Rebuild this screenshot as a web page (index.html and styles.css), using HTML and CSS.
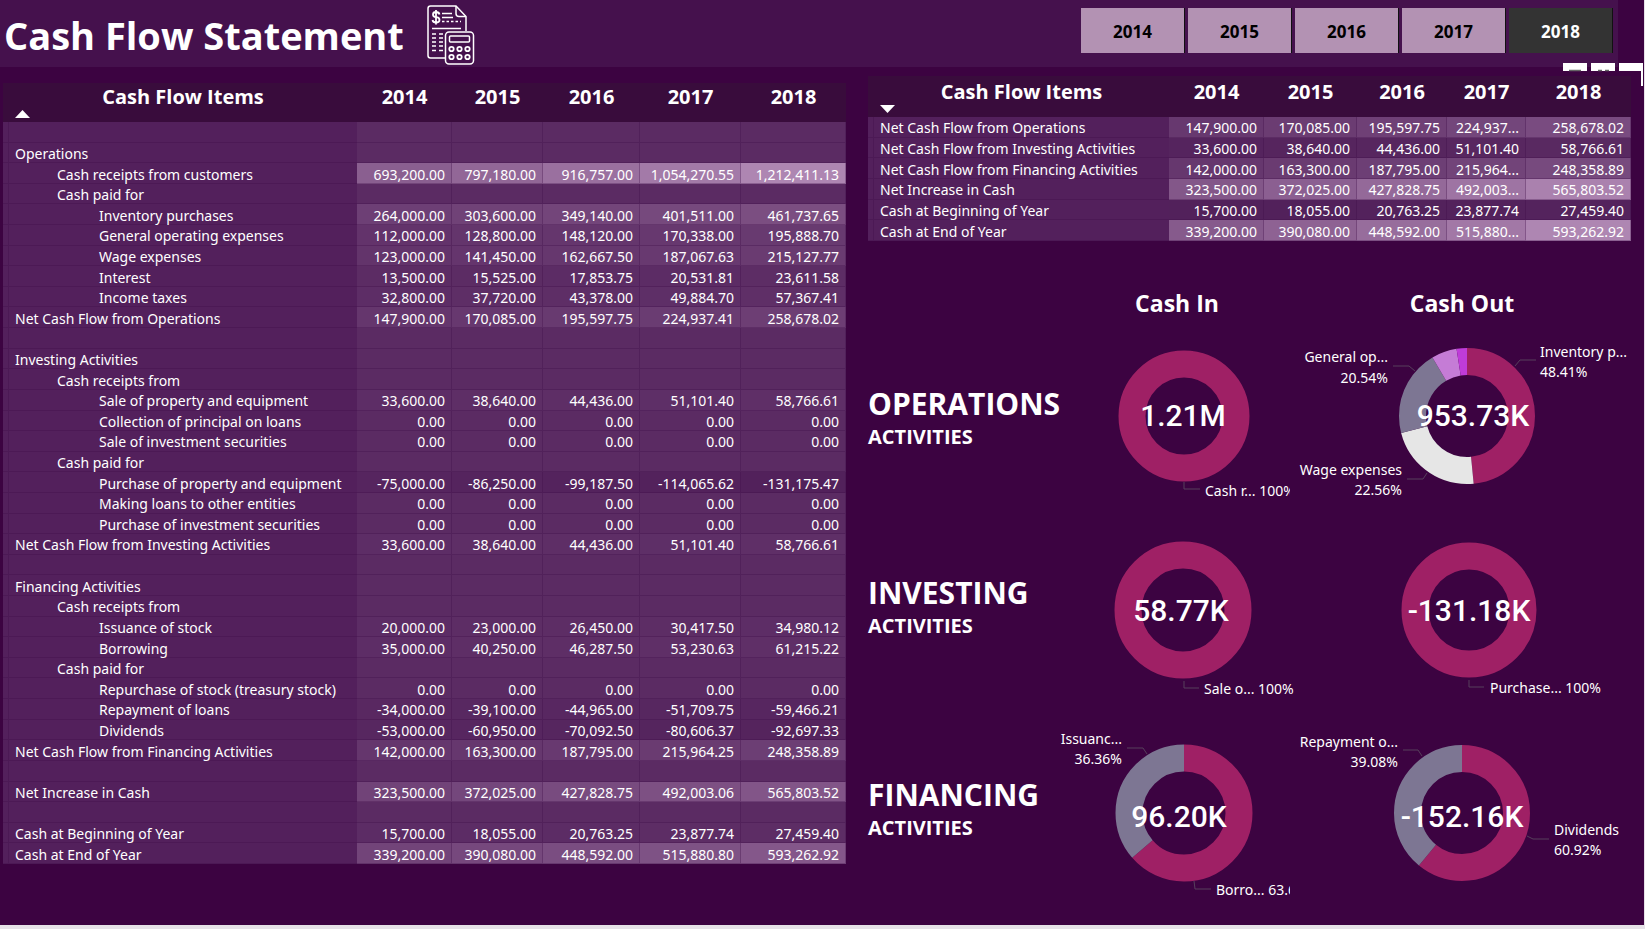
FILE: index.html
```html
<!DOCTYPE html>
<html lang="en">
<head>
<meta charset="utf-8">
<title>Cash Flow Statement</title>
<link rel="stylesheet" href="styles.css">
</head>
<body>
<div class="page">
  <header class="topbar">
    <h1 class="title">Cash Flow Statement</h1>
    <svg class="logo" viewBox="0 0 48 60" width="48" height="60" fill="none" stroke="#fff" stroke-width="1.5" aria-hidden="true">
      <path d="M18 53H3.500Q1 53 1 50.500V3.500Q1 1 3.500 1H29L39 11.500V26"/>
      <path d="M29 1V8.500Q29 11.500 32 11.500H39"/>
      <path d="M12.500 9.500Q12 7 9 7Q6 7 6 9.500Q6 12 9 12.200Q12.500 12.500 12.500 15Q12.500 17.500 9 17.500Q6 17.500 5.500 15M9 5V19.500" stroke-width="1.800"/>
      <path d="M15 8.500H25M15 12.500H26M5 23.500H34"/>
      <path d="M15 16.500H34" stroke-dasharray="2.500 2"/>
      <path d="M5 29H9M12 29H16M5 33H9M12 33H16M5 37H9M12 37H16M5 41H9M12 41H16M5 45.500H9M12 45.500H16"/>
      <rect x="18.500" y="27" width="28" height="32" rx="3.500"/>
      <rect x="22.500" y="31" width="20" height="6" rx="1"/>
      <g stroke-width="1.800"><circle cx="24.500" cy="44" r="2.200"/><circle cx="32.500" cy="44" r="2.200"/><circle cx="40.500" cy="44" r="2.200"/><circle cx="24.500" cy="52" r="2.200"/><circle cx="32.500" cy="52" r="2.200"/><circle cx="40.500" cy="52" r="2.200"/></g>
    </svg>
    <nav class="years" aria-label="Year">
      <button class="year" type="button">2014</button>
      <button class="year" type="button">2015</button>
      <button class="year" type="button">2016</button>
      <button class="year" type="button">2017</button>
      <button class="year year-on" type="button" aria-pressed="true">2018</button>
    </nav>
  </header>
  <svg class="tools" viewBox="0 0 80 23" width="80" height="23" aria-hidden="true">
    <path fill="#fff" d="M0 0H24V8H0ZM28 0H52V8H28ZM56 0H80V23H78V8H56Z"/>
    <path stroke="#666" stroke-width="1.500" d="M6 7.500H18M35 7.500H39M42 7.500H46"/>
  </svg>
  <main class="main">
    <section class="statement">
      <table class="grid" id="statement">
        <colgroup><col class="w-edge"><col class="w-item"><col class="w-14"><col class="w-15"><col class="w-16"><col class="w-17"><col class="w-18"></colgroup>
        <thead><tr><th></th><th scope="col">Cash Flow Items<svg class="sort" viewBox="0 0 15 8" width="15" height="8" aria-hidden="true"><path fill="#fff" d="M0 8L7.500 0L15 8Z"/></svg></th><th scope="col">2014</th><th scope="col">2015</th><th scope="col">2016</th><th scope="col">2017</th><th scope="col">2018</th></tr></thead>
        <tbody></tbody>
      </table>
    </section>
    <section class="side">
      <table class="grid summary" id="summary">
        <colgroup><col class="w-edge"><col class="s-item"><col class="s-14"><col class="s-15"><col class="s-16"><col class="s-17"><col class="s-18"></colgroup>
        <thead><tr><th></th><th scope="col">Cash Flow Items<svg class="sort" viewBox="0 0 15 8" width="15" height="8" aria-hidden="true"><path fill="#fff" d="M0 0L7.500 8L15 0Z"/></svg></th><th scope="col">2014</th><th scope="col">2015</th><th scope="col">2016</th><th scope="col">2017</th><th scope="col">2018</th></tr></thead>
        <tbody></tbody>
      </table>
      <div class="charts">
        <span></span><h2 class="flow">Cash In</h2><h2 class="flow flow-out">Cash Out</h2>

        <h3 class="activity">OPERATIONS<small>ACTIVITIES</small></h3>
        <svg class="chart" viewBox="0 0 240 189" role="img" aria-label="Operations cash in">
          <circle class="c1" cx="134" cy="91" r="52" stroke-width="27"/>
          <path class="lead" d="M134 157V164H150"/>
          <text class="lab" x="155" y="171">Cash r... 100%</text>
          <text class="num" x="133" y="101">1.21M</text>
        </svg>
        <svg class="chart" viewBox="0 0 352 189" role="img" aria-label="Operations cash out">
          <g data-donut="177,91,54.5,27" data-parts="48.41 c1,22.56 c2,20.54 c3,6.02 c4,2.47 c5"></g>
          <path class="lead" d="M225 41L230 35H246M125 46L119 41H103M137 148L133 154H117"/>
          <text class="lab" x="250" y="32">Inventory p...</text><text class="lab" x="250" y="52">48.41%</text>
          <text class="lab end" x="98" y="37">General op...</text><text class="lab end" x="98" y="58">20.54%</text>
          <text class="lab end" x="112" y="150">Wage expenses</text><text class="lab end" x="112" y="170">22.56%</text>
          <text class="num" x="183" y="101">953.73K</text>
        </svg>

        <h3 class="activity">INVESTING<small>ACTIVITIES</small></h3>
        <svg class="chart wide" viewBox="0 0 240 202" role="img" aria-label="Investing cash in">
          <circle class="c1" cx="133" cy="96" r="55" stroke-width="27"/>
          <path class="lead" d="M134 167V174H149"/>
          <text class="lab" x="154" y="180">Sale o... 100%</text>
          <text class="num" x="131" y="107">58.77K</text>
        </svg>
        <svg class="chart" viewBox="0 0 352 202" role="img" aria-label="Investing cash out">
          <circle class="c1" cx="179" cy="96" r="54" stroke-width="27"/>
          <path class="lead" d="M179 166V173H194"/>
          <text class="lab" x="200" y="179">Purchase... 100%</text>
          <text class="num" x="179" y="107">-131.18K</text>
        </svg>

        <h3 class="activity">FINANCING<small>ACTIVITIES</small></h3>
        <svg class="chart" viewBox="0 0 240 209" role="img" aria-label="Financing cash in">
          <g data-donut="134,97,55,27" data-parts="63.64 c1,36.36 c3"></g>
          <path class="lead" d="M97 38L93 32H77M144 165L145 173H161"/>
          <text class="lab end" x="72" y="28">Issuanc...</text><text class="lab end" x="72" y="48">36.36%</text>
          <text class="lab" x="166" y="179">Borro... 63.64%</text>
          <text class="num" x="129" y="111">96.20K</text>
        </svg>
        <svg class="chart" viewBox="0 0 352 209" role="img" aria-label="Financing cash out">
          <g data-donut="172,97,54.5,27" data-parts="60.92 c1,39.08 c3"></g>
          <path class="lead" d="M132 40L128 34H113M237 120L243 123H259"/>
          <text class="lab end" x="108" y="31">Repayment o...</text><text class="lab end" x="108" y="51">39.08%</text>
          <text class="lab" x="264" y="119">Dividends</text><text class="lab" x="264" y="139">60.92%</text>
          <text class="num" x="172" y="111">-152.16K</text>
        </svg>
      </div>
    </section>
  </main>
</div>
<script src="app.js"></script>
</body>
</html>
```
FILE: app.js
```js
// Each row: indent level | label | five yearly values
const statement = `
0
0|Operations
1|Cash receipts from customers|693,200.00|797,180.00|916,757.00|1,054,270.55|1,212,411.13
1|Cash paid for
2|Inventory purchases|264,000.00|303,600.00|349,140.00|401,511.00|461,737.65
2|General operating expenses|112,000.00|128,800.00|148,120.00|170,338.00|195,888.70
2|Wage expenses|123,000.00|141,450.00|162,667.50|187,067.63|215,127.77
2|Interest|13,500.00|15,525.00|17,853.75|20,531.81|23,611.58
2|Income taxes|32,800.00|37,720.00|43,378.00|49,884.70|57,367.41
0|Net Cash Flow from Operations|147,900.00|170,085.00|195,597.75|224,937.41|258,678.02
0
0|Investing Activities
1|Cash receipts from
2|Sale of property and equipment|33,600.00|38,640.00|44,436.00|51,101.40|58,766.61
2|Collection of principal on loans|0.00|0.00|0.00|0.00|0.00
2|Sale of investment securities|0.00|0.00|0.00|0.00|0.00
1|Cash paid for
2|Purchase of property and equipment|-75,000.00|-86,250.00|-99,187.50|-114,065.62|-131,175.47
2|Making loans to other entities|0.00|0.00|0.00|0.00|0.00
2|Purchase of investment securities|0.00|0.00|0.00|0.00|0.00
0|Net Cash Flow from Investing Activities|33,600.00|38,640.00|44,436.00|51,101.40|58,766.61
0
0|Financing Activities
1|Cash receipts from
2|Issuance of stock|20,000.00|23,000.00|26,450.00|30,417.50|34,980.12
2|Borrowing|35,000.00|40,250.00|46,287.50|53,230.63|61,215.22
1|Cash paid for
2|Repurchase of stock (treasury stock)|0.00|0.00|0.00|0.00|0.00
2|Repayment of loans|-34,000.00|-39,100.00|-44,965.00|-51,709.75|-59,466.21
2|Dividends|-53,000.00|-60,950.00|-70,092.50|-80,606.37|-92,697.33
0|Net Cash Flow from Financing Activities|142,000.00|163,300.00|187,795.00|215,964.25|248,358.89
0
0|Net Increase in Cash|323,500.00|372,025.00|427,828.75|492,003.06|565,803.52
0
0|Cash at Beginning of Year|15,700.00|18,055.00|20,763.25|23,877.74|27,459.40
0|Cash at End of Year|339,200.00|390,080.00|448,592.00|515,880.80|593,262.92`;

const summary = `
0|Net Cash Flow from Operations|147,900.00|170,085.00|195,597.75|224,937...|258,678.02
0|Net Cash Flow from Investing Activities|33,600.00|38,640.00|44,436.00|51,101.40|58,766.61
0|Net Cash Flow from Financing Activities|142,000.00|163,300.00|187,795.00|215,964...|248,358.89
0|Net Increase in Cash|323,500.00|372,025.00|427,828.75|492,003...|565,803.52
0|Cash at Beginning of Year|15,700.00|18,055.00|20,763.25|23,877.74|27,459.40
0|Cash at End of Year|339,200.00|390,080.00|448,592.00|515,880...|593,262.92`;

const LOW = [82, 33, 91], HIGH = [174, 134, 178];

function heat(value, min, max) {
  const t = (value - min) / (max - min);
  return `rgb(${LOW.map((c, i) => Math.round(c + (HIGH[i] - c) * t)).join(',')})`;
}

function fill(id, source, min, max) {
  const body = document.querySelector(`#${id} tbody`);
  for (const line of source.trim().split('\n')) {
    const [level, label = '', ...values] = line.split('|');
    const row = body.insertRow();
    row.insertCell();
    const name = document.createElement('th');
    name.scope = 'row';
    name.className = `item level-${level}`;
    name.textContent = label || '\u00a0';
    row.append(name);
    for (let i = 0; i < 5; i++) {
      const cell = row.insertCell();
      cell.className = 'value';
      cell.textContent = values[i] || '';
      cell.style.background = heat(parseFloat((values[i] || '0').replace(/,/g, '')), min, max);
    }
  }
}

fill('statement', statement, -131175.47, 1212411.13);
fill('summary', summary, 15700, 593262.92);

// Donut rings, clockwise from the top
for (const g of document.querySelectorAll('[data-donut]')) {
  const [cx, cy, r, width] = g.dataset.donut.split(',').map(Number);
  let start = 0;
  for (const part of g.dataset.parts.split(',')) {
    const [share, name] = part.split(' ');
    const arc = document.createElementNS('http://www.w3.org/2000/svg', 'circle');
    const attrs = { class: name, cx, cy, r, 'stroke-width': width, pathLength: 100,
      'stroke-dasharray': `${share} ${100 - share}`, 'stroke-dashoffset': -start,
      transform: `rotate(-90 ${cx} ${cy})` };
    for (const key in attrs) arc.setAttribute(key, attrs[key]);
    g.append(arc);
    start += Number(share);
  }
}
```
FILE: styles.css
```css
* { box-sizing: border-box; }

body {
  margin: 0;
  background: #e6e2e8;
  color: #fff;
  font-family: "Noto Sans", "Open Sans", sans-serif;
  font-size: 14px;
}

.page {
  position: relative;
  display: flex;
  flex-direction: column;
  min-height: calc(100vh - 4px);
  margin-right: 1px;
  background: #3c0341;
}

.topbar {
  display: flex;
  align-items: center;
  height: 67px;
  margin-right: 26px;
  padding: 2px 5px 0 4px;
  background: #45114d;
}

.title {
  margin: 0;
  font-family: "Open Sans", sans-serif;
  font-size: 38px;
  line-height: 60px;
  white-space: nowrap;
}

.logo { margin-left: 23px; }

.years {
  display: flex;
  gap: 3px;
  margin: 0 0 8px auto;
}

.year {
  width: 104px;
  height: 45px;
  padding-top: 3px;
  border: 0;
  border-right: 1px solid #111;
  background: #b392b3;
  color: #000;
  font: bold 17px "Open Sans", sans-serif;
}

.year-on {
  background: #333;
  color: #fff;
}

.tools {
  position: absolute;
  top: 63px;
  right: 1px;
}

.main {
  flex: 1;
  display: grid;
  grid-template-columns: 843fr 774fr;
  gap: 22px;
  padding: 0 2px 0 3px;
}

.statement {
  display: flex;
  flex-direction: column;
  padding: 16px 0 61px;
}

.statement .grid { flex: 1; }

.side { padding-top: 9px; }

.grid {
  width: 100%;
  table-layout: fixed;
  border-spacing: 0;
  background: #53205c;
}

.summary {
  width: calc(100% - 11px);
  height: 165px;
}

.grid th,
.grid td {
  padding: 0;
  white-space: nowrap;
}

.grid thead th {
  position: relative;
  height: 39px;
  padding-bottom: 12px;
  background: #390c3c;
  font-family: "Open Sans", sans-serif;
  font-size: 20px;
  line-height: 26px;
}

.summary thead th {
  height: 41px;
  padding-bottom: 10px;
}

.sort {
  position: absolute;
  left: 6px;
  bottom: 4px;
}

.grid tbody th,
.grid tbody td {
  padding-top: 3px;
  border-right: 1px solid rgba(60, 10, 70, 0.3);
  border-bottom: 1px solid rgba(60, 10, 70, 0.3);
  line-height: 16px;
}

.grid tbody .item {
  border-right: 0;
  font-weight: normal;
  text-align: left;
}

.grid .level-0 { padding-left: 6px; }
.grid .level-1 { padding-left: 48px; }
.grid .level-2 { padding-left: 90px; }

.grid .value {
  padding-right: 6px;
  text-align: right;
}

.w-edge { width: 6px; }
.w-item { width: 348px; }
.w-14 { width: 95px; }
.w-15 { width: 91px; }
.w-16 { width: 97px; }
.w-17 { width: 101px; }
.w-18 { width: 105px; }

.s-item { width: 295px; }
.s-14 { width: 95px; }
.s-15 { width: 93px; }
.s-16 { width: 90px; }
.s-17 { width: 79px; }
.s-18 { width: 105px; }

.charts {
  display: grid;
  grid-template-columns: minmax(0, 182fr) minmax(0, 240fr) minmax(0, 352fr);
  padding-top: 44px;
  font-family: "Open Sans", sans-serif;
}

.flow {
  height: 40px;
  margin: 0;
  padding-left: 14px;
  font-size: 23px;
  line-height: 36px;
  text-align: center;
}

.flow-out {
  padding: 0 8px 0 0;
}

.activity {
  margin: 0;
  padding-top: 59px;
  font-size: 30px;
  line-height: 40px;
}

.activity small {
  display: block;
  font-size: 20px;
  line-height: 26px;
}

.chart {
  display: block;
  width: 100%;
  overflow: hidden;
}

.wide { overflow: visible; }

.chart circle { fill: none; }

.c1 { stroke: #9f2065; }
.c2 { stroke: #e6e6e6; }
.c3 { stroke: #7d7693; }
.c4 { stroke: #c57cd6; }
.c5 { stroke: #bf3cd9; }

.lead {
  fill: none;
  stroke: #57405c;
}

.lab {
  fill: #fff;
  font-family: "Noto Sans", sans-serif;
  font-size: 14px;
}

.end { text-anchor: end; }

.num {
  fill: #fff;
  font: 500 30px Roboto, sans-serif;
  text-anchor: middle;
}
```
